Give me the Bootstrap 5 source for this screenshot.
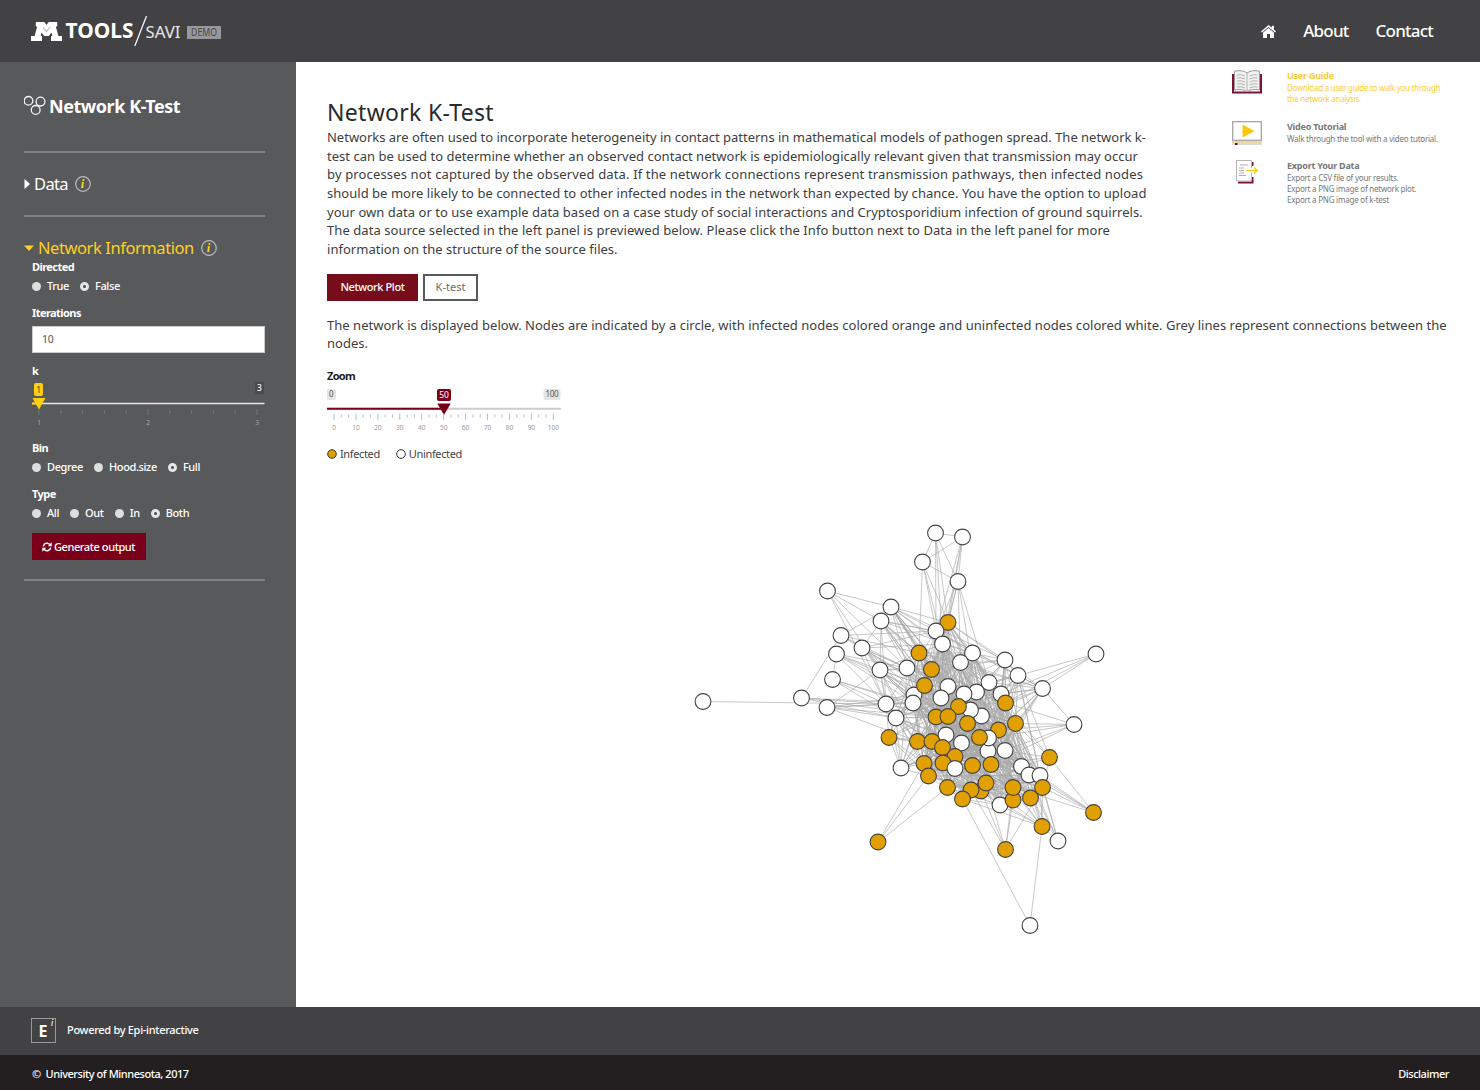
<!DOCTYPE html>
<html lang="en">
<head>
<meta charset="utf-8">
<title>Network K-Test</title>
<link href="https://cdn.jsdelivr.net/npm/bootstrap@5.3.0/dist/css/bootstrap.min.css" rel="stylesheet">
<style>
body{font-family:"Noto Sans","Open Sans",sans-serif;font-size:13px;color:#3d3d3f;width:1480px;height:1090px;overflow:hidden;background:#fff}
svg{display:block;flex:none}
svg text{font-family:"Noto Sans","Open Sans",sans-serif}
.topbar{height:62px;background:#424143;color:#fff;padding:0 47px 0 31px}
.topnav{gap:27px;font-size:17px;font-weight:500;letter-spacing:-.78px}
.topnav a{color:#fff;text-decoration:none}
.side{width:296px;background:#58595b;color:#fff;padding:0 31px 0 24px;font-size:11px;letter-spacing:-.38px}
.side h1{font-size:18px;font-weight:700;letter-spacing:-.45px;margin:0 0 0 1px}
.head{height:89px}
.rule{height:2px;background:#808183}
.sect{font-size:16.5px;line-height:20px;letter-spacing:-.63px;height:62px}
.sect.open{color:#ffcf1e;letter-spacing:-.43px;height:20px;margin-top:21px}
.sect svg:last-child{margin-left:7px}
.ctl{padding:1px 0 0 8px}
.lab{font-weight:700;font-size:11px;line-height:16px;height:16px;letter-spacing:-.56px}
.opts{height:18px;line-height:18px;gap:11px;margin-top:2px;font-weight:500}
.opts label{gap:6px}
.dot{width:9px;height:9px;border-radius:50%;background:#dedede}
.dot.on{border:3px solid #e6e6e6;background:#4a4a4c}
.gap-a{margin-top:10px}
.inp{height:27px;width:233px;border:1px solid #ccc;background:#fff;color:#555;border-radius:0;font-size:10.5px;line-height:16px;padding:4px 9px;margin-top:5px}
.gen{background:#7a0019;color:#fff;border-radius:0;height:27px;width:114px;font-size:11px;font-weight:500;padding:0 0 0 10px;line-height:26px;border:0;letter-spacing:-.42px;gap:2px;margin:11px 0 19px}
.main{height:945px}
.intro{padding:35px 0 0 31px}
.para{font-size:13px;line-height:18.67px;white-space:nowrap;letter-spacing:.028px}
.para .w0{letter-spacing:-.008px}
.para .w1{letter-spacing:.146px}
.para .w2{letter-spacing:.064px}
.pt{font-size:23px;line-height:31px;color:#2a2a2c;font-weight:400;letter-spacing:.3px;margin:0}
.tabs{gap:5px;margin:15px 0}
.tabb{height:27px;border-radius:0;font-size:11px;line-height:22px;padding:0;border:2px solid #58595b;color:#6a6b6d;background:#fff;width:55px}
.tabb.act{background:#770d1b;border-color:#770d1b;color:#fff;font-weight:500;width:91px;letter-spacing:-.4px}
.zoomlab{font-size:11px;font-weight:700;letter-spacing:-.7px;color:#222;line-height:16px;margin:15px 0 1px}
.legend-row{font-size:11px;line-height:16px;letter-spacing:-.36px;gap:16px;margin-top:12px;color:#444}
.legend-row span{gap:3px}
.help{width:248px;color:#77787b;font-size:8px;line-height:11px;letter-spacing:-.23px;padding-top:8px;white-space:nowrap}
.help b{display:block;font-size:9px;line-height:12px;letter-spacing:-.23px}
.help .pic{width:55px}
.help .hot{color:#fc3;letter-spacing:-.27px}
.foot1{height:48px;background:#424244;color:#fff;font-size:11px;font-weight:500;letter-spacing:-.3px;padding-left:31px;gap:11px}
.foot1 span{margin-bottom:2px}
.foot2{height:35px;background:#231f20;color:#fff;font-size:11px;font-weight:500;letter-spacing:-.45px;padding:3px 31px 0 32px}
</style>
<script src="https://cdn.jsdelivr.net/npm/bootstrap@5.3.0/dist/js/bootstrap.bundle.min.js"></script>
</head>
<body>
<header class="topbar d-flex justify-content-between align-items-center">
<svg width="200" height="62" viewBox="31 0 200 62">
<path d="M35.800 22h8.400l2.300 2.800L48.800 22h8.400v4.500h-1.400l2.600 9.500H62v5H51v-5h1.300l-.8-3.500-2.700 3.500h-4.600l-2.700-3.500-.8 3.500H42v5H31v-5h3.600l2.600-9.500h-1.400z" fill="#fff"/>
<path d="M42.600 27.500l3.900 5 3.900-5-.3-1-3.600 4-3.600-4z" fill="#424143" opacity=".35"/>
<text x="65.500" y="38" font-size="22" font-weight="700" fill="#fff" textLength="68" lengthAdjust="spacingAndGlyphs">TOOLS</text>
<path d="M134.800 46 146.500 16" stroke="#fff" stroke-width="1.200"/>
<text x="145.500" y="38" font-size="17" fill="#e8e8e8" textLength="35" lengthAdjust="spacingAndGlyphs">SAVI</text>
<rect x="187" y="26" width="34" height="13" fill="#97989a"/>
<text x="191" y="36" font-size="10" fill="#4a4a4c" textLength="26" lengthAdjust="spacingAndGlyphs">DEMO</text>
</svg>
<nav class="topnav d-flex align-items-center">
<svg width="15" height="13" viewBox="0 0 15 13"><path d="M7.500 0 10.800 2.800V.8h2.200v3.900L15 6.500l-1 1.100-6.500-5.500L1 7.600 0 6.500zM7.500 3 13 7.700V13H9V9H6v4H2V7.700z" fill="#fff"/></svg>
<a href="#">About</a><a href="#">Contact</a>
</nav>
</header>
<div class="d-flex main">
<aside class="side flex-shrink-0">
<div class="head d-flex align-items-center">
<svg width="24" height="24" viewBox="0 0 24 24" fill="none" stroke="#f4f4f4" stroke-width="1.300"><circle cx="4.500" cy="5.800" r="4.300"/><circle cx="16.500" cy="6.600" r="4.400"/><circle cx="11.700" cy="14.900" r="4.400"/></svg>
<h1>Network K-Test</h1></div>
<div class="rule"></div>
<div class="sect d-flex align-items-center">
<svg width="10" height="12" viewBox="0 0 10 12"><path d="M.5 1 6 6 .5 11z" fill="#fff"/></svg>Data
<svg width="16" height="16" viewBox="0 0 16 16"><circle cx="8" cy="8" r="7.300" fill="none" stroke="#bbb" stroke-width="1.200"/><text x="5.800" y="12.300" font-size="12.500" font-style="italic" font-weight="700" fill="#ffcf1e" style="font-family:'Liberation Serif',serif">i</text></svg></div>
<div class="rule"></div>
<div class="sect open d-flex align-items-center">
<svg width="14" height="12" viewBox="0 0 14 12"><path d="M0 3.500h10L5 9z" fill="#ffcf1e"/></svg>Network Information
<svg width="16" height="16" viewBox="0 0 16 16"><circle cx="8" cy="8" r="7.300" fill="none" stroke="#bbb" stroke-width="1.200"/><text x="5.800" y="12.300" font-size="12.500" font-style="italic" font-weight="700" fill="#ffcf1e" style="font-family:'Liberation Serif',serif">i</text></svg></div>
<div class="ctl">
<div class="lab">Directed</div>
<div class="opts d-flex"><label class="d-flex align-items-center"><i class="dot"></i>True</label><label class="d-flex align-items-center"><i class="dot on"></i>False</label></div>
<div class="lab gap-a">Iterations</div>
<div class="inp">10</div>
<div class="lab gap-a">k</div>
<svg id="kslider" width="240" height="51" viewBox="32 379 240 51">
<path d="M32 403.500H264.500" stroke="#e6e6e6" stroke-width="1.700"/>
<rect x="34" y="383" width="9" height="13" rx="2" fill="#ffcf10"/><text x="36.300" y="392.500" font-size="8.500" fill="#444">1</text>
<rect x="255" y="382" width="9" height="12" rx="2" fill="#4a4a4c"/><text x="257" y="391.300" font-size="8.500" fill="#fff" font-weight="500">3</text>
<path d="M32 403.500h7" stroke="#ffcf10" stroke-width="2"/><path d="M32.500 398h13l-6.500 11.500z" fill="#ffcf10"/>
</svg>
<div class="lab gap-a">Bin</div>
<div class="opts d-flex"><label class="d-flex align-items-center"><i class="dot"></i>Degree</label><label class="d-flex align-items-center"><i class="dot"></i>Hood.size</label><label class="d-flex align-items-center"><i class="dot on"></i>Full</label></div>
<div class="lab gap-a">Type</div>
<div class="opts d-flex"><label class="d-flex align-items-center"><i class="dot"></i>All</label><label class="d-flex align-items-center"><i class="dot"></i>Out</label><label class="d-flex align-items-center"><i class="dot"></i>In</label><label class="d-flex align-items-center"><i class="dot on"></i>Both</label></div>
<button class="btn gen d-flex align-items-center"><svg width="10" height="10" viewBox="0 0 10 10"><path d="M1.300 4.300A3.800 3.800 0 0 1 8 2.600M8.700 5.700A3.800 3.800 0 0 1 2 7.400" fill="none" stroke="#fff" stroke-width="1.500"/><path d="M9.700.3v4h-4zM.3 9.700v-4h4z" fill="#fff"/></svg>Generate output</button>
</div>
<div class="rule"></div>
</aside>
<main class="flex-grow-1">
<div class="d-flex justify-content-between">
<div class="intro">
<h2 class="pt">Network K-Test</h2>
<div class="para"><span class="w0">Networks are often used to incorporate heterogeneity in contact patterns in mathematical models of pathogen spread. The network k-</span><br>test can be used to determine whether an observed contact network is epidemiologically relevant given that transmission may occur<br><span class="w1">by processes not captured by the observed data. If the network connections represent transmission pathways, then infected nodes</span><br>should be more likely to be connected to other infected nodes in the network than expected by chance. You have the option to upload<br>your own data or to use example data based on a case study of social interactions and Cryptosporidium infection of ground squirrels.<br><span class="w2">The data source selected in the left panel is previewed below. Please click the Info button next to Data in the left panel for more</span><br>information on the structure of the source files.</div>
</div>
<div class="help">
<div class="d-flex" style="height:51px"><div class="pic"><svg width="31" height="24" viewBox="0 0 31 24"><path d="M1 4v18.500h28V4" fill="none" stroke="#7a1430" stroke-width="2"/><path d="M2.500 1.200Q10-.5 15 3q5-3.500 12.500-1.800V20Q20 18.500 15 21.500 10 18.500 2.500 20z" fill="#f2f2f2" stroke="#999" stroke-width="1"/><path d="M15 3v18.500M5 5q4-1 8 1M5 8q4-1 8 1M5 11q4-1 8 1M5 14q4-1 8 1M5 17q4-1 8 1M17.500 6q4-2 8-1M17.500 9q4-2 8-1M17.500 12q4-2 8-1M17.500 15q4-2 8-1M17.500 18q4-2 8-1" fill="none" stroke="#aaa" stroke-width=".9"/></svg></div><div class="hot"><b>User Guide</b>Download a user guide to walk you through<br>the network analysis.</div></div>
<div class="d-flex" style="height:39px"><div class="pic"><svg width="31" height="24" viewBox="0 0 31 24"><rect x=".7" y=".7" width="28.600" height="18.600" fill="#fff" stroke="#a5a5a8" stroke-width="1.300"/><path d="M10.500 3.500 22.500 10l-12 6.500z" fill="#ffc60b"/><path d="M0 21h30" stroke="#d8b04a" stroke-width="1"/><path d="M0 23h30" stroke="#b5b5b8" stroke-width="1"/><path d="M3 23h2.500" stroke="#7a0019" stroke-width="2"/></svg></div><div><b>Video Tutorial</b>Walk through the tool with a video tutorial.</div></div>
<div class="d-flex"><div class="pic"><svg width="31" height="25" viewBox="0 0 31 25"><path d="M20.500 2v4M20.500 17v5.500H6" fill="none" stroke="#7a1430" stroke-width="2"/><path d="M19.500 8V.5h-15V21h15v-8" fill="#fff" stroke="#b5b5b8" stroke-width="1"/><path d="M8 5h8M7 8h5M7 10.500h5M7 13h5M7 15.500h7" stroke="#999" stroke-width=".8"/><path d="M14 10.500h11M22 7.500l3.300 3-3.300 3" fill="none" stroke="#ffc60b" stroke-width="1.200"/></svg></div><div><b>Export Your Data</b>Export a CSV file of your results.<br>Export a PNG image of network plot.<br>Export a PNG image of k-test</div></div>
</div>
</div>
<div style="padding-left:31px">
<div class="tabs d-flex"><button class="btn tabb act">Network Plot</button><button class="btn tabb">K-test</button></div>
<div class="para">The network is displayed below. Nodes are indicated by a circle, with infected nodes colored orange and uninfected nodes colored white. Grey lines represent connections between the<br>nodes.</div>
<div class="zoomlab">Zoom</div>
<svg id="zslider" width="250" height="49" viewBox="327 385 250 49">
<rect x="327" y="389" width="9" height="11" rx="2" fill="#e4e4e4"/><text x="329" y="397" font-size="8" fill="#555">0</text>
<rect x="543.500" y="389" width="17" height="11" rx="2" fill="#e4e4e4"/><text x="545.500" y="397" font-size="8" fill="#555" textLength="13">100</text>
<path d="M327 408.800H561" stroke="#ccc" stroke-width="2"/><path d="M327 408.800H444" stroke="#7a0019" stroke-width="2"/>
<rect x="437" y="389" width="14" height="12" rx="2" fill="#7a0019"/><text x="439.300" y="397.800" font-size="8.500" fill="#fff" textLength="9.500">50</text>
<path d="M437.300 403.500h13.400l-6.700 11.500z" fill="#7a0019"/>
</svg>
<div class="legend-row d-flex"><span class="d-flex align-items-center"><svg width="10" height="10" viewBox="0 0 10 10"><circle cx="5" cy="5" r="4.300" fill="#e29f00" stroke="#333"/></svg>Infected</span><span class="d-flex align-items-center"><svg width="10" height="10" viewBox="0 0 10 10"><circle cx="5" cy="5" r="4.300" fill="#fff" stroke="#333"/></svg>Uninfected</span></div>
<svg id="net" width="840" height="500" viewBox="327 462 840 500"><g id="edges" stroke="#a9a9a9" stroke-width=".8" stroke-opacity=".8"></g><g id="nodes" stroke="#444" stroke-width="1.100"></g></svg>
</div>
</main>
</div>
<footer class="foot1 d-flex align-items-center"><svg width="25" height="26" viewBox="0 0 25 26"><rect x=".5" y=".5" width="24" height="24" fill="none" stroke="#999"/><text x="7.500" y="18.500" font-size="16" font-weight="700" fill="#fff">E</text><text x="20" y="8" font-size="8" font-style="italic" fill="#fff">i</text></svg><span>Powered by Epi-interactive</span></footer>
<footer class="foot2 d-flex justify-content-between align-items-center"><span>©&nbsp; University of Minnesota, 2017</span><span>Disclaimer</span></footer>
<script>
const NS='http://www.w3.org/2000/svg';
function add(parent,tag,attrs,text){const e=document.createElementNS(NS,tag);for(const k in attrs)e.setAttribute(k,attrs[k]);if(text!=null)e.textContent=text;parent.appendChild(e);return e}
const el=id=>document.getElementById(id);
// slider scales
for(let i=0;i<=10;i++){const x=39+i*21.8,major=i%5===0;
  add(el('kslider'),'path',{d:`M${x} ${major?409:410.500}v${major?6:3}`,stroke:major?'#5f7890':'#7b7c7e','stroke-width':1});
  if(major)add(el('kslider'),'text',{x,y:424.500,'font-size':6.500,fill:'#aaa','text-anchor':'middle'},1+i/5)}
for(let i=0;i<=30;i++){const x=334+i*7.310,major=i%3===0;
  add(el('zslider'),'path',{d:`M${x} ${major?413.500:414.500}v${major?6.500:3}`,stroke:major?'#a8c4e0':'#bbb','stroke-width':1});
  if(major)add(el('zslider'),'text',{x,y:430,'font-size':6.500,fill:'#999','text-anchor':'middle'},i/3*10)}
// contact network: x, y, infected flag
const N=[[935.5,533],[962.5,537],[922.5,562],[958,581.5],[827.5,591],[891,607],[881,621],[841,635.5],[948,622.5,1],[936,631],[942.5,644],[862,648],[836.5,654],[919,653,1],[972.5,653],[960.5,662.5],[1005,660],[1096,654],[907,668],[931.5,669.5,1],[880,670],[1018,675.5],[832.5,679.5],[914,695],[924.5,685.5,1],[948,686.5],[989,682.5],[1042.5,688.5],[976.5,692],[964,694],[1001,694],[913,703],[941,698],[801.5,698],[703,701.5],[827,707.5],[886,704],[896,718],[1005.5,703,1],[981.5,716],[970.5,710],[958.5,706.5,1],[936,717,1],[948,716.5,1],[967.5,723.5,1],[1015.5,723.5,1],[1074,724.5],[998.5,730,1],[946,735],[988,751],[988.5,738],[979.5,737.5,1],[961.5,743],[889,737.5,1],[917.5,741.5,1],[932,741.5,1],[942.5,747.5,1],[1005,750.5],[955,756.5,1],[1049.5,757.5,1],[901,768],[924,763.5,1],[943,763,1],[955,768.5],[972.5,765.5,1],[991,764.5,1],[928.5,776,1],[1021.5,766.5],[1029,775],[1040,775.5],[947.5,787.5,1],[981,791,1],[971,790,1],[986,783,1],[962.5,799,1],[1000,805],[1013,800,1],[1013,787.5,1],[1030.5,798,1],[1042.5,787.5,1],[1042,826.5,1],[1093.5,812.5,1],[1058,841],[1005.5,849.5,1],[878,842,1],[1030,925.5]];
// ties of the nodes on the rim
const rim={0:[1,2,3,9,10,8],1:[2,3,8,10,9],2:[3,9,10,13,8],3:[8,9,10,15,26,28],4:[5,6,20,18,36],33:[7,36,37,42,31],34:[36],17:[21,27,30,38],46:[27,45,38,47,50,57,65],59:[45,38,67,57,65,81,79,21],81:[69,79,68,67,77],82:[69,79,68,78,67,80],83:[71,72,77,76,73,79],84:[61,66,70],85:[74,80],80:[69,68,67,77,75,71,65,57,73,79,74],35:[36,37,31,42,54,23,20],22:[12,36,37,31,43],12:[18,36,20,41,42,23],7:[9,18,24,5,32,13],11:[6,18,36,20,9,42,10],5:[9,10,19,16,18,24,25,26,29,13,41],6:[9,13,18,24,20,36,32,29,19,14],27:[21,38,45,30,50,57,65,44,47,26],21:[16,26,38,30,50,45,57,65,14],16:[8,26,30,38,14,47,28,21],60:[53,54,37,61,42,36,48,56,10],53:[36,54,61,42,66,31,55,37],36:[31,42,54,23,55,24,43,20],37:[31,42,54,55,23,66,61,43],20:[13,18,24,31,36,42,19]};
const line=(a,b)=>add(el('edges'),'path',{d:`M${N[a][0]} ${N[a][1]}L${N[b][0]} ${N[b][1]}`});
for(const a in rim)rim[a].forEach(b=>line(a,b));
// dense centre
let seed=12345;const rnd=()=>(seed=(seed*1103515245+12345)%2147483648)/2147483648;
const out=new Set([0,1,2,3,4,17,33,34,46,81,82,83,84,85,59,80,60,35,22,12,7,11,5,6,27,21,16,53,36,37,20]);
const outer=new Set([5,6,11,16,20,21,27,36,37,53,60]);
for(let a=0;a<N.length;a++)for(let b=a+1;b<N.length;b++){
  const d=Math.hypot(N[a][0]-N[b][0],N[a][1]-N[b][1]),r=rnd();
  if(!out.has(a)&&!out.has(b)){if(r<(d<75?.5:d<130?.36:.16))line(a,b)}
  else if((outer.has(a)&&!out.has(b))||(outer.has(b)&&!out.has(a))){if(r<(d<130?.12:.05))line(a,b)}}
N.forEach(n=>add(el('nodes'),'circle',{cx:n[0],cy:n[1],r:7.900,fill:n[2]?'#e29f00':'#fff'}));
</script>
</body>
</html>
